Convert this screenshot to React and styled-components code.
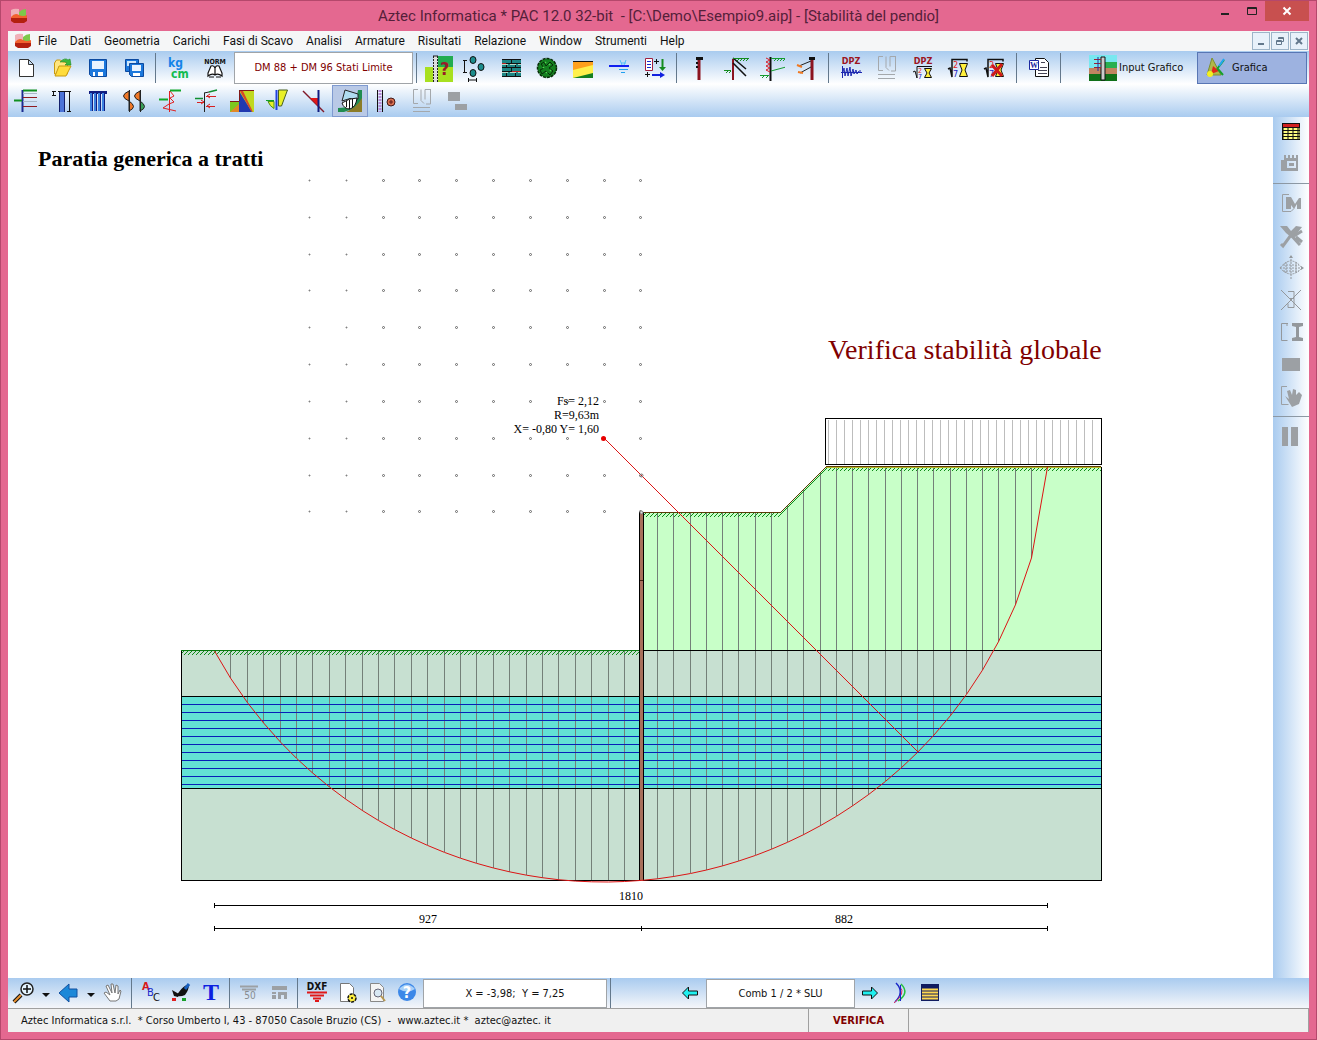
import React from 'react'
import styled, { createGlobalStyle } from 'styled-components'

const ui = 'Roboto, "Open Sans", sans-serif'
const small = '"DejaVu Sans Condensed", "DejaVu Sans", sans-serif'
const serif = '"Liberation Serif", serif'

/* ---------- icons, all on a 28x28 grid ---------- */

const Logo = () => (
    <svg width="18" height="16" viewBox="0 0 18 16">
        <path d="M1 2q3-2 8-1v8H1z" fill="#f0b0b8" />
        <path d="M9 4q3-3 7-3v8H9z" fill="#7dc84a" />
        <path d="M1 9q4-5 8-2 4 2 8 0v4H1z" fill="#f2622e" />
        <path d="M1 10h16v3l-3 2H4l-3-2z" fill="#b3200f" />
    </svg>
)

const icons = {
    newFile: <path d="M7.500 5.500h9l5 5v12h-14zM16.500 5.500v5h5" fill="#fff" stroke="#333" />,
    open: <>
        <path d="M6.500 20V9l2-3h4l2 2h5v12z" fill="#ffe680" stroke="#c89a10" />
        <path d="M7 22l4-10h12l-5 10z" fill="#ffdc3c" stroke="#c89a10" />
        <path d="M12 8q5-5 8-2l2-1 1 6h-6l2-2q-2-2-7-1z" fill="#3cb83c" stroke="#1c8a20" strokeWidth=".6" />
    </>,
    save: <>
        <path d="M5.500 5.500h17v17h-15l-2-2z" fill="#1c78dc" stroke="#0c4aa0" />
        <path d="M8 7h12v8H8z" fill="#e8f4ff" />
        <path d="M9 18h10v4H9z" fill="#fff" /><path d="M11 18h3v4h-3z" fill="#1c78dc" />
    </>,
    saveAll: <>
        <path d="M5.500 5.500h13v12h-13z" fill="#1c78dc" stroke="#0c4aa0" /><path d="M7 7h9v5H7z" fill="#cfe6fa" />
        <path d="M9.500 9.500h14v13h-12l-2-2z" fill="#1c78dc" stroke="#0c4aa0" />
        <path d="M12 11h9v6h-9z" fill="#e8f4ff" /><path d="M13 19h7v3h-7z" fill="#fff" />
    </>,
    units: <>
        <text x="4" y="13" fontFamily={small} fontWeight="bold" fontSize="12" fill="#1484e8">kg</text>
        <text x="7" y="24" fontFamily={small} fontWeight="bold" fontSize="12" fill="#12bc50">cm</text>
    </>,
    norm: <>
        <text x="15" y="10" textAnchor="middle" fontFamily={small} fontWeight="bold" fontSize="7" fill="#111">NORM</text>
        <path d="M15 21q-3-2-7 1v-3l3-7q3-1 4 2q1-3 4-2l3 7v3q-4-3-7-1zM15 14v7" fill="#fff" stroke="#111" strokeWidth="1.200" />
        <path d="M9 23h5M16 23h5" stroke="#111" />
    </>,
    wallHelp: <>
        <path d="M13 2h15v11H13z" fill="#22ac50" /><path d="M0 13h28v15H0z" fill="#a8e020" />
        <path d="M8 2h5v26H8z" fill="#ddd" /><path d="M8.500 2v26M12.500 2v26" stroke="#222" strokeDasharray="2 1" />
        <path d="M8 2h5" stroke="#222" />
        <text x="15" y="21" fontFamily={small} fontWeight="bold" fontSize="18" fill="#981c28">?</text>
    </>,
    piles: <>
        <g fill="#1c8c8c" stroke="#111"><ellipse cx="12" cy="6" rx="3" ry="3.500" /><ellipse cx="20" cy="13" rx="3" ry="3.500" /><ellipse cx="12" cy="19" rx="3" ry="3.500" /></g>
        <path d="M2 6.500h4M3.500 6v12M2 18.500h4M7.500 24v4M15.500 24v4M7 26h9" stroke="#111" fill="none" />
    </>,
    bricks: <>
        <path d="M5 5h19v18H5z" fill="#1c8484" />
        <path d="M5 5.500h19M5 9.500h19M5 13.500h19M5 17.500h19M5 22.500h19M14.500 5v4M9.500 9v4M18.500 9v4M14.500 13v4M9.500 17v5M18.500 17v5" stroke="#111" />
        <path d="M5 10.500h19M5 18.500h19" stroke="#b4d8c8" strokeDasharray="6 2" />
        <path d="M5 9.500h4M15 17.500h8" stroke="#c02020" />
    </>,
    tree: <>
        <circle cx="14" cy="14" r="9.500" fill="#148020" stroke="#062c08" strokeWidth="1.500" strokeDasharray="3 1" />
        <path d="M8 10l3-2 2 4 4-4 3 3-4 3 4 3-3 4-4-4-4 3-2-4 4-2z" stroke="#062c08" fill="none" />
        <path d="M10 13l1 1M16 10l1 1M13 18l1 1M17 16l1 1M12 8l1 1" stroke="#50d850" strokeWidth="1.500" />
    </>,
    terrain: <>
        <path d="M4 7h20v17H4z" fill="#ffa01c" /><path d="M4 16l20-5v13H4z" fill="#fff04c" />
        <path d="M4 24l20-5v5z" fill="#148020" /><path d="M4 7.500h20" stroke="#111" />
    </>,
    water: <>
        <path d="M15 6l2 5M21 6l-2 5M16 9h5" stroke="#50c0f8" /><path d="M4 12h20" stroke="#1020f0" strokeWidth="2" />
        <path d="M14 15.500h9M16 18.500h4" stroke="#20a0f0" />
    </>,
    loads: <>
        <path d="M4.500 4.500h7v12h-7z" fill="#fff" stroke="#a02040" /><path d="M6 7.500h4M6 10.500h4M6 13.500h4" stroke="#1828d0" />
        <path d="M13 7.500h5M15.500 5v5M4 20.500h5M6.500 18v5" stroke="#111" />
        <path d="M21.500 5v10" stroke="#148c20" strokeWidth="2" /><path d="M18 13h7l-3.500 4z" fill="#148c20" />
        <path d="M11 21h9" stroke="#1020e0" strokeWidth="2" /><path d="M19 18l5 3-5 3z" fill="#1020e0" />
    </>,
    pile: <><path d="M14 6v20" stroke="#8c1420" strokeWidth="3" /><path d="M11 3h7v3h-7z" fill="#111" /><path d="M12 8v2M12 12v2" stroke="#111" strokeWidth="2" /></>,
    anchors: <><path d="M12 5v21" stroke="#8c1420" strokeWidth="2" /><path d="M12 4l13 11M12 9l13 13" stroke="#111" fill="none" strokeWidth="1.500" /><path d="M12 4.500h16M3 16.500h7" stroke="#148c20" /><path d="M16 7l2-2M19 7l2-2M22 7l2-2M25 7l2-2M5 19l2-2M8 19l2-2" stroke="#148c20" /></>,
    springs: <><path d="M13.500 3v24" stroke="#111" strokeWidth="2" /><path d="M9 4l4 2-4 2 4 2-4 2 4 2-4 2 4 2" stroke="#d81c28" fill="none" /><path d="M14 4.500h16M3 21.500h9M14 17l15-4" stroke="#149c30" /><path d="M17 7l2-2M20 7l2-2M23 7l2-2M26 7l2-2M5 24l2-2M9 24l2-2" stroke="#149c30" /></>,
    tieBack: <><path d="M19 5v21" stroke="#8c1420" strokeWidth="3" /><path d="M16 3h6v3h-6z" fill="#111" /><path d="M18 7L6 12M18 13L7 19" stroke="#222" /><path d="M4 11l5 2M5 18l5 1" stroke="#f07820" strokeWidth="2" /></>,
    dpz: <><text x="14" y="10" textAnchor="middle" fontFamily={small} fontWeight="bold" fontSize="9" fill="#9c1420">DPZ</text><path d="M5.500 12v12M4 18.500h21" stroke="#1c28b0" /><path d="M6 18l1-4 1 8 2-8 1 8 2-9 1 9 2-7 1 5 2-4 1 4 2-3h2" stroke="#1c28b0" fill="none" /></>,
    sheetOff: <path d="M10 2.500H5.500v14H10M13 2.500v11l3 3M22 2.500h-5v10M22.500 2v15H18M5 20.500h17M5 24.500h17" stroke="#a4a8ac" fill="none" />,
    calc: <>
        <path d="M3 15l2-1 2 9V5.500h15v2" stroke="#111" fill="none" strokeWidth="1.500" />
        <text x="8" y="14" fontFamily={small} fontSize="9" fill="#e02020">2</text><text x="8" y="23" fontFamily={small} fontSize="9" fill="#2020c0">7</text>
        <path d="M14.500 9.500h8L20 16l2.500 6.500h-8L17 16z" fill="#fff03c" stroke="#111" />
    </>,
    word: <><path d="M10.500 4.500h9l4 4v14h-13z" fill="#fff" stroke="#111" /><path d="M15 13.500h7M13 16.500h9M13 19.500h9M16 8.500h4" stroke="#445" /><path d="M4.500 6.500h9v9h-9z" fill="#fff" stroke="#1c28a0" /><text x="5" y="14" fontFamily={serif} fontWeight="bold" fontSize="8" fill="#1c28a0">W</text></>,
    inputGraphic: <>
        <path d="M0 1h28v14H0z" fill="#78e8f0" /><path d="M14 8h14v8H14z" fill="#28b050" /><path d="M0 14h28v7H0z" fill="#c08460" /><path d="M0 20h28v7H0z" fill="#107018" />
        <path d="M12 3h4v23h-4z" fill="#ccc" stroke="#111" /><path d="M5 5.500h7M5 9.500h7M5 13.500h7" stroke="#a02030" /><path d="M9 3v14" stroke="#2030a0" />
    </>,
    graphic: <><path d="M10 4l9 17H5z" fill="#b0b848" stroke="#7c9030" /><path d="M11 12l6 5-8 3z" fill="#e02818" /><circle cx="8" cy="20" r="3" fill="#f4f020" /><path d="M22 6l-7 9M15 14l6 7" stroke="#18a028" strokeWidth="2" /><path d="M22 5l-5 7" stroke="#20a8f0" strokeWidth="2" /></>,

    stratLeft: <><path d="M10.500 3v22" stroke="#1c2c90" strokeWidth="2" /><path d="M11 3.500h14M2 13.500h8" stroke="#109020" strokeWidth="2" /><path d="M11 10.500h14M11 19.500h14" stroke="#901c20" /><path d="M11 6.500h14M11 14.500h14" stroke="#a8b8c8" /></>,
    pileSize: <><path d="M14 5v20" stroke="#4c74d8" strokeWidth="4" /><path d="M11.500 5v20M16.500 5v20" stroke="#14206c" /><path d="M10 4.500h9M19 4.500h4M21.500 4v20M19 24.500h4M5.500 4v4M4 4.500h4M4 8.500h4" stroke="#111" fill="none" /></>,
    curtain: <><path d="M5 4h18v3H5z" fill="#101c80" /><path d="M7 6v18M11 6v18M15 6v18M19 6v18" stroke="#3c80e0" strokeWidth="2" /><path d="M8.500 6v18M12.500 6v18M16.500 6v18M20.500 6v18" stroke="#101c80" /></>,
    moment: <><path d="M9 4q-11 5 0 10zM9 14q9 6 0 10zM20 4q-11 5 0 10z" fill="#f07828" stroke="#222" /><path d="M20 14q9 6 0 10z" fill="#38a058" stroke="#222" /><path d="M9.500 3v22M20.500 3v22" stroke="#222" /></>,
    pressure: <><path d="M13.500 4v21" stroke="#e02020" /><path d="M14 4l4 5-4 2 4 4-5 2-6 4 13 3" fill="none" stroke="#e02020" /><path d="M14 3.500h11M3 12.500h9" stroke="#10a828" strokeWidth="2" /></>,
    forces: <><path d="M12.500 6v19M12 6l5-1" stroke="#222" fill="none" /><path d="M17 5l8-2M3 11.500h8" stroke="#109030" strokeWidth="1.500" /><path d="M14 9.500h10M14 19.500h9M5 15.500h7M18 7l-3 2 3 2M18 17l-3 2 3 2M9 13l3 2-3 2" stroke="#d82020" fill="none" /></>,
    wedge: <><path d="M2 14h9v11H2z" fill="#7cc820" /><path d="M11 4h15v21H11z" fill="#c0d820" /><path d="M11 4v21h13z" fill="#2038b0" /><path d="M12 4h3l10 21-2-1z" fill="#d84828" /><path d="M2 25l9-8v8z" fill="#e08828" /><path d="M2 14.500h9M11.500 4v10M11 3.500h15" stroke="#801818" /></>,
    diagrams: <><path d="M14.500 3h9l-6 16h-3z" fill="#e8f028" stroke="#486020" /><path d="M4 14.500h6v7q-4-2-6-7z" fill="#e8f028" stroke="#489020" /><path d="M12.500 3v20" stroke="#2040e0" strokeWidth="2" /><path d="M2 13.500h8" stroke="#10a028" /></>,
    cut: <><path d="M3 4l21 21" stroke="#801828" strokeWidth="1.500" /><path d="M10 11h8v8z" fill="#e01818" /><path d="M18.500 3v22" stroke="#101c80" strokeWidth="2" /></>,
    slope: <>
        <path d="M26 3v22H10q12-5 16-22z" fill="#8c7c28" /><path d="M22 3h4v8q-6 11-18 14H2v-4q18 0 20-18z" fill="#208c50" />
        <path d="M6 14l3-11 13 4v5q-8-2-16 2z" fill="#b0dcf0" stroke="#222" />
        <path d="M6 16q7-5 15-5-1 9-7 11-6 0-8-6z" fill="#fff" stroke="#111" /><path d="M10.500 14v6M13.500 13v9M16.500 12v9" stroke="#111" />
    </>,
    section: <><path d="M5.500 3v22M10.500 3v22" stroke="#111" /><path d="M8 3v22" stroke="#b888d8" strokeWidth="3" strokeDasharray="2 1" /><circle cx="19" cy="15" r="4" fill="#d87050" stroke="#401818" /><path d="M17 15h4M19 13v4" stroke="#601818" /></>,
    blocksOff: <path d="M4 5h12v9H4zM11 17h12v6H11z" fill="#9ca0a4" />,

    tableYellow: <><path d="M5 6h18v17H5z" fill="#111" /><path d="M6 7h16v3H6z" fill="#d02020" /><path d="M6.500 12h16M6.500 15h16M6.500 18h16M6.500 21h16" stroke="#ffff80" strokeWidth="2" strokeDasharray="4 1" /></>,
    plotOff: <path d="M4 22V11h3V6h2v3h2V6h2v3h2V6h2v3h2V6h2v16zM10 12v7h9v-7zM12 14h5v3h-5z" fill="#9ca0a4" fillRule="evenodd" />,
    momentOff: <><path d="M12 4.500H5.500v17H14l3-3" stroke="#9ca0a4" fill="none" /><path d="M9 7h5l4 7 4-6h2v11h-4v-5l-3 5-3-4v4H9z" fill="#9ca0a4" /></>,
    toolsOff: <><path d="M3 4h7l4 5 5-5 6 1-7 9-3 2-6-5z" fill="#9ca0a4" /><path d="M13 12l10 11M19 15l6 5M14 13L6 24l-2-2M17 14l8-5" stroke="#9ca0a4" strokeWidth="3" /></>,
    gridOff: <><path d="M3 14q11-14 22 0q-11 12-22 0zM14 2v24M3 14h22M9 8v12M19 8v12M6 11h16M6 17h16" fill="none" stroke="#94989c" strokeDasharray="2 1" /><path d="M12 4l2-3 2 3zM24 12l3 2-3 2z" fill="#94989c" /></>,
    crossOff: <path d="M4 4l20 20M24 4L4 24M11 5.500h6v7h-5h5v9h-6v-4" fill="none" stroke="#94989c" />,
    beamOff: <><path d="M11 5.500H4.500v17h6M10 5v3" fill="none" stroke="#94989c" /><path d="M15 5h11v3l-4 1v10l4 1v3H15v-3l4-1V9l-4-1z" fill="#94989c" /></>,
    rectOff: <path d="M5 8h18v13H5z" fill="#9ca0a4" />,
    handOff: <><path d="M10 4.500H4.500v18h7" fill="none" stroke="#9ca0a4" /><path d="M8 14l4 3-2-8 3-1 2 5 1-6 3 1v5l3-3 3 3-3 9-7 3z" fill="#9ca0a4" /></>,
    barsOff: <path d="M5 4h6v19H5zM14 4h7v19h-7z" fill="#9ca0a4" />,

    zoom: <><path d="M12 16l-7 7" stroke="#111" strokeWidth="4" /><path d="M12 16l-7 7" stroke="#e89030" strokeWidth="2" /><circle cx="18" cy="10" r="6" fill="#e4f4ff" stroke="#222" strokeWidth="1.500" /><path d="M14 10h8M18 6v8" stroke="#111" strokeWidth="1.500" /></>,
    back: <path d="M5 14l10-9v5h8v8h-8v5z" fill="#1c88d8" stroke="#1050a0" />,
    hand: <path d="M11 22l-6-8 2-1 4 3-4-9 2-1 4 8-1-9h2l2 9 1-8 2 1v8l2-4 1 1-2 8-3 2z" fill="#fff" stroke="#777" />,
    abc: <g fontFamily={small} fontSize="11"><text x="5" y="11" fontWeight="bold" fill="#d81818">A</text><text x="10" y="17" fill="#1828c8">B</text><text x="16" y="22" fill="#111">C</text></g>,
    paint: <><path d="M12 13q4-6 10-8 0 6-4 11-4 2-9 1z" fill="#111" /><path d="M18 10l4-5" stroke="#1860c0" strokeWidth="3" /><path d="M5 11l7 4-1 3-4-1z" fill="#111" /><path d="M5 19h4v3H5z" fill="#e02020" /><path d="M15 19h4v3h-4z" fill="#18a028" /></>,
    text: <text x="14" y="21" textAnchor="middle" fontFamily={serif} fontWeight="bold" fontSize="24" fill="#0c20e0">T</text>,
    scaleOff: <><path d="M5 7.500h18M7 10.500h14" stroke="#9ca0a4" strokeWidth="2" /><text x="15" y="20" textAnchor="middle" fontFamily={small} fontSize="10" fill="#888c90">50</text></>,
    columnsOff: <path d="M7 7h15v4H7zM7 13h4v2H7zM7 16h4v4H7zM13 13h9v7h-3v-4h-3v4h-3z" fill="#9ca0a4" />,
    dxf: <><text x="14" y="11" textAnchor="middle" fontFamily={small} fontWeight="bold" fontSize="10" fill="#111">DXF</text><path d="M4 13.500h20M7 16.500h14M10 19.500h8M12 22h4" stroke="#e01818" strokeWidth="2" /></>,
    pageSetup: <><path d="M7.500 4.500h9l4 4v14h-13z" fill="#fff" stroke="#777" /><circle cx="19" cy="19" r="4" fill="#fff040" stroke="#111" strokeWidth="1.500" strokeDasharray="3 1" /><circle cx="19" cy="19" r="1" fill="#111" /></>,
    preview: <><path d="M7.500 4.500h9l4 4v14h-13z" fill="#f4f4f4" stroke="#888" /><circle cx="15" cy="14" r="4" fill="#d8e8f4" stroke="#667" /><path d="M18 17l4 5" stroke="#b89850" strokeWidth="2" /></>,
    help: <><circle cx="14" cy="13" r="9" fill="#3c88e8" /><path d="M6 10q8-9 16 0-8 5-16 0z" fill="#a8d0f8" /><text x="14" y="19" textAnchor="middle" fontFamily={small} fontWeight="bold" fontSize="16" fill="#fff">?</text></>,
    prev: <path d="M6.500 14l6-6v4h9v4h-9v4z" fill="#20f0f0" stroke="#111" />,
    next: <path d="M21.500 14l-6-6v4h-9v4h9v4z" fill="#20f0f0" stroke="#111" />,
    curves: <><path d="M10 4q9 9-1 19" fill="none" stroke="#1828c8" strokeWidth="1.500" /><path d="M15 5q9 9-3 17" fill="none" stroke="#28c040" strokeWidth="1.500" /><path d="M14 8q6 6-6 16" stroke="#d83060" fill="none" /><path d="M14.500 6v16" stroke="#1828c8" /></>,
    list: <><path d="M5 5h18v17H5z" fill="#111c60" /><path d="M6 10.500h16M6 13.500h16M6 16.500h16M6 19.500h16" stroke="#ffd850" strokeWidth="2" /></>,
}
icons.dpzCalc = (
    <>
        <text x="14" y="10" textAnchor="middle" fontFamily={small} fontWeight="bold" fontSize="9" fill="#9c1420">DPZ</text>
        <path d="M4 18l2-1 2 7V12.500h15" stroke="#111" fill="none" />
        <text x="9" y="19" fontFamily={small} fontSize="7" fill="#e02020">2</text><text x="9" y="25" fontFamily={small} fontSize="7" fill="#2020c0">7</text>
        <path d="M15.500 14.500h7L20 19l2.500 4.500h-7L18 19z" fill="#fff03c" stroke="#111" />
    </>
)
icons.calcOff = <>{icons.calc}<path d="M11 11l10 11M21 10L11 22" stroke="#d01818" strokeWidth="3" /></>

const Icon = ({ name }) => <svg width="28" height="28" viewBox="0 0 28 28" fill="none" aria-hidden="true">{icons[name]}</svg>

const menu = ['File', 'Dati', 'Geometria', 'Carichi', 'Fasi di Scavo', 'Analisi', 'Armature', 'Risultati', 'Relazione', 'Window', 'Strumenti', 'Help']
const mainGroups = [
    ['wallHelp', 'piles', 'bricks', 'tree', 'terrain', 'water', 'loads'],
    ['pile', 'anchors', 'springs', 'tieBack'],
    ['dpz', 'sheetOff', 'dpzCalc', 'calc', 'calcOff'],
    ['word'],
]
const resultTools = ['stratLeft', 'pileSize', 'curtain', 'moment', 'pressure', 'forces', 'wedge', 'diagrams', 'cut', 'slope', 'section', 'sheetOff', 'blocksOff']
const sideGroups = [
    ['tableYellow', 'plotOff'],
    ['momentOff', 'toolsOff', 'gridOff', 'crossOff', 'beamOff', 'rectOff', 'handOff'],
    ['barsOff'],
]

const Tools = ({ names, active }) => names.map((name) => (
    <Tool key={name} aria-label={name} $active={name === active}><Icon name={name} /></Tool>
))

/* ---------- slope stability drawing ---------- */

const center = { x: 604, y: 438 }
const radius = 444
const ground = (x) => {
    if (x < 641) return 651
    if (x <= 780) return 513
    if (x <= 826) return 513 - (x - 780)
    return 467
}
const arcY = (x) => center.y + Math.sqrt(Math.max(radius ** 2 - (x - center.x) ** 2, 0))
const range = (n) => Array.from({ length: n }, (_, i) => i)
const cuts = [
    ...range(26).map((i) => 214 + i * 16.400),
    ...range(26).map((i) => 641 + i * 16.240),
].map((x) => Math.round(x) + 0.500)
const arc = cuts.map((x, i) => {
    const last = i === cuts.length - 1
    return `${x},${i === 0 ? 651 : last ? 467 : arcY(x).toFixed(1)}`
}).join(' ')

const Drawing = () => (
    <Plot viewBox="8 117 1265 861" preserveAspectRatio="xMinYMin meet">
        <defs>
            <pattern id="grass" width="4" height="4" patternUnits="userSpaceOnUse" y="3">
                <path d="M0 4l4-4M-1 1l2-2M3 5l2-2" stroke="#0c8c18" />
            </pattern>
        </defs>
        <text x="38" y="166" fontSize="22" fontWeight="bold">Paratia generica a tratti</text>
        <text x="828" y="359" fontSize="28" fill="#800000">Verifica stabilità globale</text>

        <g fill="#fff" stroke="#666">
            {range(100).map((i) => (
                <circle key={i} cx={Math.round(309 + (i % 10) * 36.830) + 0.500} cy={Math.round(180 + Math.floor(i / 10) * 36.830) + 0.500} r={i % 10 < 2 ? 0.500 : 1} />
            ))}
        </g>

        <g shapeRendering="crispEdges">
            <path d="M181 651h920v229H181z" fill="#c7e0d1" />
            <path d="M643 513h137l46-46h275v184H643z" fill="#c8ffc8" />
            <path d="M181 696h920v92H181z" fill="#63e2d4" />
            {cuts.slice(1, -1).map((x) => <path key={x} d={`M${x} ${ground(x)}V${Math.min(arcY(x), 881)}`} stroke="#748078" />)}
            {range(11).map((i) => <path key={i} d={`M181 ${704.500 + i * 8}h920`} stroke="#0820b8" />)}
            <path d="M181.500 651v229.500h920V467M181 696.500h920M181 788.500h920M643 650.500h458" stroke="#000" fill="none" />
        </g>
        <path d="M182 651h457v4H182zM644 513h136v4H644zM826 467h275v4H826z" fill="url(#grass)" />
        <g shapeRendering="crispEdges">
            <path d="M181 650.500h459" stroke="#087810" />
            <path d="M643 512.500h137M826 466.500h275" stroke="#5c3c08" />
            <path d="M826 467.500h275" stroke="#b8b828" />
            <path d="M825.500 418.500h276v46h-276z" fill="#fff" stroke="#000" />
            {range(34).map((i) => <path key={i} d={`M${828.500 + i * 8} 420v44`} stroke="#bdbdbd" />)}
            <path d="M639 512h5v369h-5z" fill="#000" />
            <path d="M640 512h3v369h-3z" fill="#a8705c" />
            <path d="M640 580.500h3" stroke="#402010" />
        </g>
        <path d="M780 513l46-46" stroke="#5c3c08" />
        <path d="M780 515l46-46" stroke="#0c8c18" />
        <polyline points={arc} fill="none" stroke="#dc1414" />
        <path d="M604 438l314 314" stroke="#dc1414" />
        <circle cx="603.500" cy="438.500" r="2.500" fill="#e80000" />
        <circle cx="641.500" cy="475.500" r="1.500" fill="none" stroke="#777" />
        <circle cx="641.500" cy="512.500" r="1.500" fill="#ddd" stroke="#777" />

        <g fontSize="12" textAnchor="end">
            <text x="599" y="405">Fs= 2,12</text>
            <text x="599" y="419">R=9,63m</text>
            <text x="599" y="433">X= -0,80 Y= 1,60</text>
        </g>
        <g fontSize="12" textAnchor="middle">
            <text x="631" y="900">1810</text>
            <text x="428" y="923">927</text>
            <text x="844" y="923">882</text>
        </g>
        <path d="M214 905.500h834M214.500 903v5M1047.500 903v5M214 928.500h834M214.500 926v5M641.500 926v5M1047.500 926v5" stroke="#000" />
    </Plot>
)

export default function App() {
    return (
        <Frame>
            <Reset />
            <TitleBar>
                <Logo />
                <Title>Aztec Informatica * PAC 12.0 32-bit &nbsp;- [C:\Demo\Esempio9.aip] - [Stabilità del pendio]</Title>
                <WindowButtons>
                    <WindowButton aria-label="Minimize"><svg width="10" height="10"><path d="M1 7h8v2H1z" fill="#222" /></svg></WindowButton>
                    <WindowButton aria-label="Maximize"><svg width="10" height="10"><path d="M.5 1.500h9v7h-9zM0 2.500h10" fill="none" stroke="#222" /></svg></WindowButton>
                    <WindowButton $close aria-label="Close"><svg width="10" height="10"><path d="M1.500 1.500l7 7M8.500 1.500l-7 7" stroke="#fff" strokeWidth="2" /></svg></WindowButton>
                </WindowButtons>
            </TitleBar>

            <Client>
                <MenuBar>
                    <Logo />
                    {menu.map((item) => <MenuItem key={item}>{item}</MenuItem>)}
                    <ChildButtons>
                        <ChildButton aria-label="Minimize document"><svg width="10" height="10"><path d="M2 7h6v2H2z" fill="#63788c" /></svg></ChildButton>
                        <ChildButton aria-label="Restore document"><svg width="10" height="10"><path d="M3.500 3V1.500h5v4H7M1.500 4.500h5v4h-5zM1 5.500h6M3 2.500h6" fill="none" stroke="#63788c" /></svg></ChildButton>
                        <ChildButton aria-label="Close document"><svg width="10" height="10"><path d="M2 2l6 6M8 2L2 8" stroke="#63788c" strokeWidth="2" /></svg></ChildButton>
                    </ChildButtons>
                </MenuBar>

                <Toolbar>
                    <Tools names={['newFile', 'open', 'save', 'saveAll']} />
                    <Divider />
                    <Tools names={['units', 'norm']} />
                    <Field $width={179} $color="#800000" aria-label="Normativa" readOnly value="DM 88 + DM 96 Stati Limite" />
                    {mainGroups.map((names) => <React.Fragment key={names[0]}><Divider /><Tools names={names} /></React.Fragment>)}
                    <Divider />
                    <Modes>
                        <Mode><Icon name="inputGraphic" />Input Grafico</Mode>
                        <Mode $active><Icon name="graphic" />Grafica</Mode>
                    </Modes>
                </Toolbar>
                <Toolbar $flip>
                    <Tools names={resultTools} active="slope" />
                </Toolbar>

                <Work>
                    <Canvas><Drawing /></Canvas>
                    <SideBar>
                        {sideGroups.map((names, i) => (
                            <React.Fragment key={names[0]}>
                                {i > 0 && <SideDivider />}
                                {names.map((name) => <SideTool key={name} aria-label={name}><Icon name={name} /></SideTool>)}
                            </React.Fragment>
                        ))}
                    </SideBar>
                </Work>

                <BottomBar>
                    <Tools names={['zoom']} /><Drop aria-label="Zoom options" />
                    <Tools names={['back']} /><Drop aria-label="View history" />
                    <Tools names={['hand']} />
                    <Divider />
                    <Tools names={['abc', 'paint', 'text']} />
                    <Divider />
                    <Tools names={['scaleOff', 'columnsOff']} />
                    <Divider />
                    <Tools names={['dxf', 'pageSetup', 'preview', 'help']} />
                    <Field $width={184} aria-label="Coordinate" readOnly value="X = -3,98;  Y = 7,25" />
                    <Divider />
                    <Combination>
                        <Tools names={['prev']} />
                        <Field $width={149} aria-label="Combinazione" readOnly value="Comb 1 / 2 * SLU" />
                        <Tools names={['next', 'curves', 'list']} />
                    </Combination>
                </BottomBar>

                <StatusBar>
                    <Pane>Aztec Informatica s.r.l. &nbsp;* Corso Umberto I, 43 - 87050 Casole Bruzio (CS) &nbsp;- &nbsp;www.aztec.it * &nbsp;aztec@aztec. it</Pane>
                    <Pane $width={100} $alert>VERIFICA</Pane>
                    <Pane $width={400} />
                </StatusBar>
            </Client>
        </Frame>
    )
}

const Reset = createGlobalStyle`
    *{
        box-sizing: border-box;
    }
    body{
        margin: 0;
    }
    button, input{
        margin: 0;
        padding: 0;
        border: none;
        background: none;
        font: inherit;
        color: inherit;
    }
    svg{
        display: block;
        flex: none;
    }
`;

const Frame = styled.div`
    display: flex;
    flex-direction: column;
    min-height: 100vh;
    padding: 0 7px 7px;
    border: 1px solid #b5486c;
    background-color: #e46890;
    font-family: ${small};
    font-size: 11px;
    color: #111;
`;

const TitleBar = styled.header`
    display: flex;
    align-items: center;
    height: 30px;
    padding-left: 2px;
`;

const Title = styled.h1`
    flex: 1;
    margin: 0;
    padding-left: 78px;
    text-align: center;
    white-space: nowrap;
    font-family: ${ui};
    font-size: 15px;
    font-weight: normal;
    color: #54203a;
`;

const WindowButtons = styled.div`
    display: flex;
    align-self: flex-start;
`;

const WindowButton = styled.button`
    display: flex;
    align-items: center;
    justify-content: center;
    width: ${({ $close }) => $close ? '44px' : '27px'};
    height: 20px;
    background-color: ${({ $close }) => $close ? '#c8504f' : 'transparent'};
`;

const Client = styled.main`
    flex: 1;
    display: flex;
    flex-direction: column;
    background-color: #fff;
`;

const MenuBar = styled.nav`
    display: flex;
    align-items: center;
    gap: 13px;
    height: 20px;
    padding-left: 6px;
    background-color: #f5f6f7;
    font-family: ${ui};
    font-size: 12px;
    svg + button{
        margin-left: -7px;
    }
`;

const MenuItem = styled.button`
    white-space: nowrap;
`;

const ChildButtons = styled.div`
    display: flex;
    gap: 1px;
    margin-left: auto;
    padding-right: 1px;
`;

const ChildButton = styled.button`
    display: flex;
    align-items: center;
    justify-content: center;
    width: 18px;
    height: 18px;
    border: 1px solid #9db4c8;
    background-color: #e8f1fa;
`;

const Tool = styled.button`
    display: flex;
    align-items: center;
    justify-content: center;
    flex: none;
    width: 36px;
    height: 32px;
    border: 1px solid ${({ $active }) => $active ? '#7f9ad0' : 'transparent'};
    background-color: ${({ $active }) => $active ? '#b9c9e6' : 'transparent'};
`;

const Divider = styled.div`
    flex: none;
    width: 8px;
    height: 30px;
    background: linear-gradient(#63788c, #63788c) 3px 0 / 1px 100% no-repeat;
`;

const Field = styled.input`
    flex: none;
    width: ${({ $width }) => $width}px;
    height: 32px;
    margin-left: 2px;
    border: 1px solid #a0a4a8;
    background-color: #fff;
    text-align: center;
    color: ${({ $color }) => $color || '#111'};
`;

const Toolbar = styled.div`
    display: flex;
    align-items: center;
    height: 33px;
    background: linear-gradient(${({ $flip }) => $flip ? '0deg' : '180deg'}, #a9cbef, #fff);
`;

const Modes = styled.div`
    display: flex;
    flex: 1;
    justify-content: flex-end;
    gap: 3px;
    padding-right: 2px;
`;

const Mode = styled.button`
    display: flex;
    align-items: center;
    gap: 2px;
    width: 110px;
    height: 32px;
    padding-left: 4px;
    white-space: nowrap;
    border: 1px solid ${({ $active }) => $active ? '#5876b4' : 'transparent'};
    background-color: ${({ $active }) => $active ? '#9db2e0' : 'transparent'};
`;

const Work = styled.section`
    flex: 1;
    display: flex;
    min-height: 0;
`;

const Canvas = styled.div`
    flex: 1;
    min-width: 0;
    background-color: #fff;
`;

const Plot = styled.svg`
    width: 100%;
    height: auto;
    font-family: ${serif};
    text{
        fill: #000;
    }
    text[fill]{
        fill: #800000;
    }
`;

const SideBar = styled.aside`
    display: flex;
    flex-direction: column;
    flex: none;
    width: 36px;
    background: linear-gradient(90deg, #a9cbef, #fff);
`;

const SideTool = styled.button`
    display: flex;
    justify-content: center;
    height: 32px;
`;

const SideDivider = styled.div`
    height: 9px;
    background: linear-gradient(#8c98a4, #8c98a4) 0 2px / 100% 1px no-repeat;
`;

const BottomBar = styled.div`
    display: flex;
    align-items: center;
    height: 30px;
    background: linear-gradient(#a9cbef, #f4f6fa);
    ${Tool}{
        width: 30px;
        height: 28px;
    }
    ${Field}{
        height: 29px;
        margin-left: 1px;
    }
`;

const Drop = styled.button`
    flex: none;
    width: 15px;
    height: 28px;
    &::after{
        content: '';
        display: block;
        width: 0;
        margin: 4px auto 0;
        border: 4px solid transparent;
        border-top-color: #111;
        border-bottom: none;
    }
`;

const Combination = styled.div`
    display: flex;
    align-items: center;
    margin-left: 60px;
`;

const StatusBar = styled.footer`
    display: flex;
    height: 24px;
    border-top: 1px solid #a0a0a0;
    background-color: #f0f0f0;
`;

const Pane = styled.div`
    display: flex;
    align-items: center;
    justify-content: ${({ $alert }) => $alert ? 'center' : 'flex-start'};
    flex: ${({ $width }) => $width ? `0 0 ${$width}px` : '1'};
    padding-left: ${({ $alert }) => $alert ? '0' : '13px'};
    border-right: 1px solid #a0a0a0;
    white-space: nowrap;
    font-weight: ${({ $alert }) => $alert ? 'bold' : 'normal'};
    color: ${({ $alert }) => $alert ? '#800000' : '#111'};
`;
